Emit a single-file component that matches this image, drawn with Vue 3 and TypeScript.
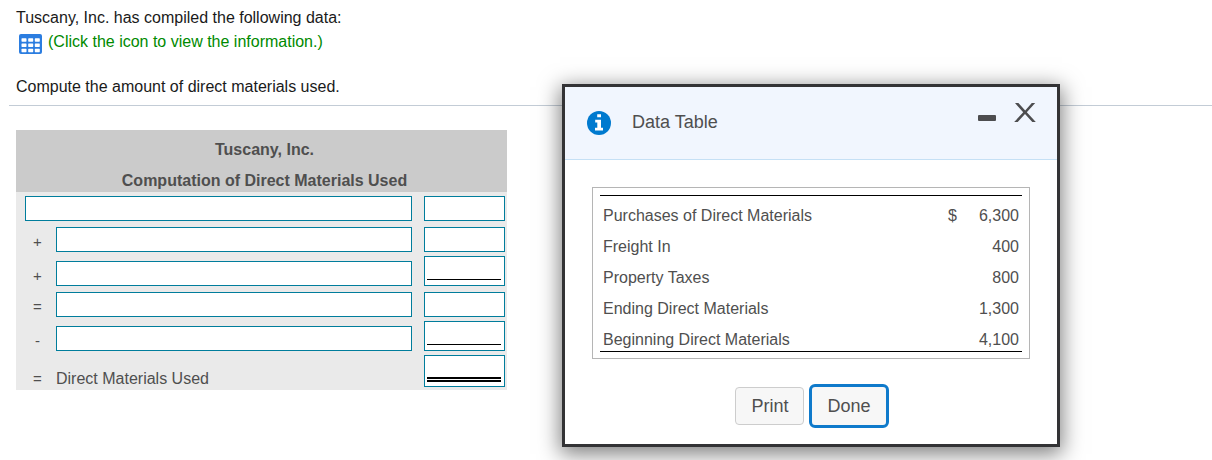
<script setup lang="ts">
import { ref } from 'vue'

interface WorksheetRow {
  operator: string
  label: string
  amount: string
  rule: 'none' | 'single' | 'double'
  caption?: string
}

const rows = ref<WorksheetRow[]>([
  { operator: '', label: '', amount: '', rule: 'none' },
  { operator: '+', label: '', amount: '', rule: 'none' },
  { operator: '+', label: '', amount: '', rule: 'single' },
  { operator: '=', label: '', amount: '', rule: 'none' },
  { operator: '-', label: '', amount: '', rule: 'single' },
  { operator: '=', label: '', amount: '', rule: 'double', caption: 'Direct Materials Used' },
])

const data = [
  { name: 'Purchases of Direct Materials', currency: '$', value: '6,300' },
  { name: 'Freight In', currency: '', value: '400' },
  { name: 'Property Taxes', currency: '', value: '800' },
  { name: 'Ending Direct Materials', currency: '', value: '1,300' },
  { name: 'Beginning Direct Materials', currency: '', value: '4,100' },
]

const open = ref(true)
const minimized = ref(false)

function show() {
  open.value = true
  minimized.value = false
}

function printTable() {
  window.print()
}
</script>

<template>
  <main class="page">
    <section class="prompt">
      <p>Tuscany, Inc. has compiled the following data:</p>
      <a class="view-link" href="#data-table" @click.prevent="show">
        <svg class="grid-icon" viewBox="0 0 23 20" aria-hidden="true">
          <rect width="23" height="20" rx="2" fill="#2b7de0" />
          <g fill="#fff">
            <rect x="2.5" y="4.3" width="5" height="3.4" rx=".6" /><rect x="9.2" y="4.3" width="5" height="3.4" rx=".6" /><rect x="15.8" y="4.3" width="5" height="3.4" rx=".6" />
            <rect x="2.5" y="9.5" width="5" height="3.4" rx=".6" /><rect x="9.2" y="9.5" width="5" height="3.4" rx=".6" /><rect x="15.8" y="9.5" width="5" height="3.4" rx=".6" />
            <rect x="2.5" y="14.8" width="5" height="3.4" rx=".6" /><rect x="9.2" y="14.8" width="5" height="3.4" rx=".6" /><rect x="15.8" y="14.8" width="5" height="3.4" rx=".6" />
          </g>
        </svg>
        <span>(Click the icon to view the information.)</span>
      </a>
      <p class="task">Compute the amount of direct materials used.</p>
    </section>
    <hr class="divider" />

    <table class="worksheet">
      <colgroup>
        <col class="col-operator" />
        <col />
        <col class="col-amount" />
      </colgroup>
      <thead>
        <tr><th colspan="3">Tuscany, Inc.</th></tr>
        <tr><th colspan="3">Computation of Direct Materials Used</th></tr>
      </thead>
      <tbody>
        <tr v-for="(row, i) in rows" :key="i" :class="row.rule">
          <td v-if="row.operator" class="operator">{{ row.operator }}</td>
          <td class="label" :class="{ wide: !row.operator }" :colspan="row.operator ? 1 : 2">
            <label v-if="row.caption" class="caption" :for="'amount-' + i">{{ row.caption }}</label>
            <input v-else v-model="row.label" class="field" type="text" :aria-label="'Line ' + (i + 1) + ' description'" />
          </td>
          <td class="amount">
            <div class="amount-box">
              <input :id="'amount-' + i" v-model="row.amount" type="text" :aria-label="'Line ' + (i + 1) + ' amount'" />
            </div>
          </td>
        </tr>
      </tbody>
    </table>

    <div v-if="open" id="data-table" class="dialog" role="dialog" aria-labelledby="dialog-title">
      <header class="dialog-header">
        <svg class="info-icon" viewBox="0 0 24 24" aria-hidden="true">
          <circle cx="12" cy="12" r="12" fill="#007acf" />
          <path d="M10.2 3.2h3.8v3h-3.8zM8.2 8.7h5.8v8h2v2.8H8v-2.8h2.3v-5.1H8.2z" fill="#fff" />
        </svg>
        <h2 id="dialog-title">Data Table</h2>
        <button class="icon-button minimize" type="button" aria-label="Minimize" @click="minimized = !minimized">
          <svg viewBox="0 0 18 6" width="18" height="6"><rect width="18" height="6" rx="1" fill="#4d4d4f" /></svg>
        </button>
        <button class="icon-button close" type="button" aria-label="Close" @click="open = false">
          <svg viewBox="0 0 22 19" width="22" height="19">
            <path d="M1 0h3.4L11.2 7.6 17.8 0h3.4l-8.4 9.3L21.8 19h-3.5L11 11.1 3.7 19H.2l9-9.7z" fill="#4d4d4f" />
          </svg>
        </button>
      </header>
      <div v-if="!minimized" class="dialog-body">
        <div class="frame">
          <table class="data">
            <tbody>
              <tr v-for="item in data" :key="item.name">
                <th scope="row">{{ item.name }}</th>
                <td class="currency">{{ item.currency }}</td>
                <td class="value">{{ item.value }}</td>
              </tr>
            </tbody>
          </table>
        </div>
        <footer class="actions">
          <button class="button" type="button" @click="printTable">Print</button>
          <button class="button primary" type="button" @click="open = false">Done</button>
        </footer>
      </div>
    </div>
  </main>
</template>

<style>
body {
  margin: 0;
  background: #fff;
}
</style>

<style scoped>
.page {
  position: relative;
  min-height: 100vh;
  overflow: hidden;
  box-sizing: border-box;
  font-family: "Liberation Sans", Arial, sans-serif;
  font-size: 16px;
  line-height: 24px;
  color: #1a1a1a;
}

.prompt {
  padding: 6px 16px 0;
}

p {
  margin: 0;
}

.view-link {
  display: flex;
  align-items: flex-start;
  gap: 6px;
  padding-left: 3px;
  color: #008a00;
  text-decoration: none;
}

.grid-icon {
  width: 23px;
  height: 20px;
  margin-top: 4px;
}

.task {
  margin-top: 21px;
}

.divider {
  height: 1px;
  margin: 6px 0 24px 9px;
  border: 0;
  background: #c3ccd6;
}

.worksheet {
  width: calc(100% - 32px);
  max-width: 491px;
  margin: 0 16px;
  border-collapse: collapse;
  table-layout: fixed;
  background: #eaeaea;
  color: #4f4f4f;
}

.col-operator {
  width: 40px;
}

.col-amount {
  width: 89px;
}

.worksheet thead {
  background: #cbcbcb;
}

.worksheet th {
  height: 23px;
  padding: 8px 0 0 6px;
  line-height: 23px;
  font-weight: bold;
  text-align: center;
}

.worksheet td {
  padding: 2px 6px 2px 0;
  vertical-align: bottom;
}

.worksheet .none td {
  padding-top: 4px;
}

.worksheet .double td {
  padding-bottom: 3px;
}

.worksheet td.operator {
  padding-right: 0;
  padding-left: 3px;
  font-size: 15px;
  line-height: 20px;
  text-align: center;
}

.worksheet td.wide {
  padding-left: 9px;
}

.worksheet td.amount {
  padding-right: 2px;
  padding-left: 6px;
}

.caption {
  display: block;
  line-height: 17px;
}

.worksheet .double td.operator {
  line-height: 17px;
}

input {
  display: block;
  box-sizing: border-box;
  width: 100%;
  margin: 0;
  padding: 0 4px;
  border: 0;
  border-radius: 0;
  outline: 0;
  background: #fff;
  color: inherit;
  font: inherit;
  line-height: 20px;
}

.field {
  height: 25px;
  border: 1px solid #007d9c;
}

.amount-box {
  box-sizing: border-box;
  height: 25px;
  padding: 0 3px 0 2px;
  border: 1px solid #007d9c;
  background: #fff;
}

.amount-box input {
  height: 23px;
}

.single .amount-box {
  height: 30px;
}

.single .amount-box input {
  height: 23px;
  border-bottom: 1px solid #000;
}

.double .amount-box {
  height: 32px;
}

.double .amount-box input {
  height: 26px;
  border-bottom: 5px double #000;
}

.dialog {
  position: absolute;
  top: 84px;
  left: 562px;
  box-sizing: border-box;
  width: 498px;
  border: 3px solid #333335;
  background: #fff;
  box-shadow: 0 5px 20px 2px rgba(0, 0, 0, 0.5);
  color: #4f4f4f;
}

.dialog-header {
  display: flex;
  align-items: flex-start;
  box-sizing: border-box;
  height: 73px;
  padding: 16px 21px 0 22px;
  border-bottom: 1px solid #c5e0f5;
  background: #f1f6fe;
}

.info-icon {
  width: 24px;
  height: 24px;
  margin-top: 8px;
}

h2 {
  flex: 1;
  margin: 7px 0 0 21px;
  font-size: 18px;
  line-height: 24px;
  font-weight: normal;
}

.icon-button {
  display: flex;
  padding: 0;
  border: 0;
  background: none;
  cursor: pointer;
}

.minimize {
  margin: 12px 18px 0 0;
}

.dialog-body {
  padding: 27px 27px 16px;
}

.frame {
  padding: 7px 7px 6px;
  border: 1px solid #b5b5b5;
}

.data {
  width: 100%;
  border-top: 1px solid #000;
  border-bottom: 1px solid #000;
  border-spacing: 0;
}

.data th,
.data td {
  padding: 8px 3px 0;
  line-height: 23px;
  font-weight: normal;
  text-align: left;
}

.data .currency {
  width: 24px;
}

.data .value {
  width: 41px;
  text-align: right;
}

.actions {
  display: flex;
  justify-content: center;
  align-items: center;
  gap: 5px;
  margin-top: 25px;
  padding-left: 2px;
}

.button {
  box-sizing: border-box;
  height: 38px;
  padding: 0 15px;
  border: 1px solid #cdcdcd;
  border-radius: 4px;
  background: #f7f7f7;
  color: #4f4f4f;
  font: inherit;
  font-size: 18px;
  cursor: pointer;
}

.primary {
  height: 44px;
  border: 3px solid #0f7acb;
  border-radius: 6px;
}
</style>
